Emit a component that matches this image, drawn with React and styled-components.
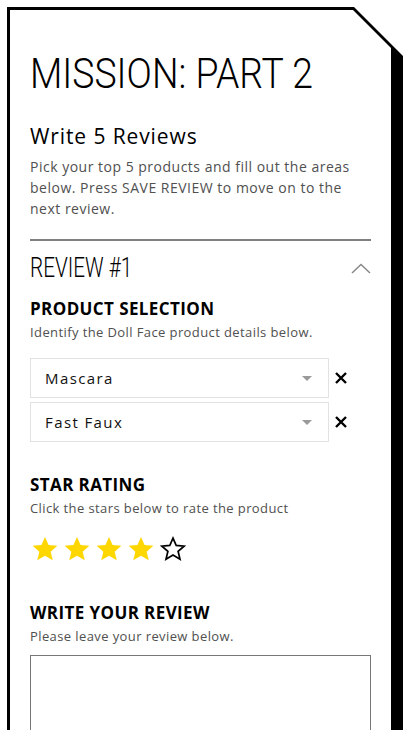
import React from "react";
import styled, { createGlobalStyle } from "styled-components";

const Global = createGlobalStyle`
  html, body { margin: 0; padding: 0; background: #fff; overflow: hidden; }
  body { font-family: "Open Sans", "Liberation Sans", sans-serif; }
  * { box-sizing: border-box; }
`;

const Frame = styled.div`
  margin: 7px 0 0 7px;
  width: 396px;
  padding: 3px 12px 0 3px;
  background: #000;
  clip-path: polygon(0 0, 347px 0, 100% 49px, 100% 100%, 0 100%);
`;

const Panel = styled.div`
  background: #fff;
  min-height: 900px;
  padding: 40px 20px 0 20px;
  clip-path: polygon(0 0, 343px 0, 100% 38px, 100% 100%, 0 100%);
`;

const Title = styled.h1`
  margin: 0;
  font-family: Roboto, sans-serif;
  font-weight: 300;
  font-size: 42px;
  line-height: 48px;
  color: #000;
  display: inline-block;
  white-space: nowrap;
  transform: scaleX(0.89);
  transform-origin: left center;
`;

const Subhead = styled.h2`
  margin: 25px 0 0;
  font-weight: 500;
  font-size: 21px;
  line-height: 26px;
  letter-spacing: 0.9px;
  color: #000;
`;

const Intro = styled.p`
  margin: 7px 0 0;
  font-size: 14px;
  line-height: 21px;
  letter-spacing: 0.5px;
  color: #505050;
`;

const Divider = styled.hr`
  margin: 20px 0 0;
  border: 0;
  height: 2px;
  background: #808080;
`;

const ReviewHeader = styled.div`
  margin-top: 11px;
  display: flex;
  align-items: center;
  justify-content: space-between;
`;

const ReviewTitle = styled.h3`
  margin: 0;
  font-family: Roboto, sans-serif;
  font-weight: 300;
  font-size: 28px;
  line-height: 32px;
  display: inline-block;
  white-space: nowrap;
  transform: scaleX(0.74);
  transform-origin: left center;
`;

const Section = styled.section`
  margin-top: ${(p) => p.$top}px;
`;

const SectionTitle = styled.h4`
  margin: 0;
  font-weight: 700;
  font-size: 17px;
  line-height: 20px;
  letter-spacing: 0.4px;
  color: #000;
`;

const SectionHint = styled.p`
  margin: 4px 0 0;
  font-size: 13px;
  line-height: 18px;
  letter-spacing: 0.4px;
  color: #505050;
`;

const SelectList = styled.div`
  margin-top: 17px;
  display: flex;
  flex-direction: column;
  gap: 4px;
`;

const SelectRow = styled.div`
  display: flex;
  align-items: center;
  gap: 5px;
`;

const SelectBox = styled.div`
  width: 299px;
  height: 40px;
  border: 1px solid #e2e2e2;
  display: flex;
  align-items: center;
  justify-content: space-between;
  padding: 0 16px 0 14px;
  font-size: 15px;
  letter-spacing: 1.4px;
  color: #111;
`;

const Caret = styled.span`
  width: 0;
  height: 0;
  border-left: 5px solid transparent;
  border-right: 5px solid transparent;
  border-top: 5px solid #9a9a9a;
`;

const RemoveButton = styled.button`
  border: 0;
  background: none;
  padding: 0;
  width: 14px;
  height: 14px;
  display: flex;
  cursor: pointer;
`;

const Stars = styled.div`
  margin-top: 19px;
  display: flex;
  gap: 6px;
  padding-left: 2px;
`;

const TextArea = styled.textarea`
  margin-top: 10px;
  display: block;
  width: 100%;
  height: 160px;
  border: 1px solid #777;
  resize: none;
  font-family: inherit;
`;

const StarIcon = ({ filled }) => (
  <svg width="26" height="26" viewBox="0 0 24 24">
    <path
      d="M12 0.9l3.3 7.5 8.1.7-6.15 5.35 1.9 7.95L12 18.2l-7.15 4.2 1.9-7.95L0.6 9.1l8.1-.7z"
      fill={filled ? "#FFD700" : "none"}
      stroke={filled ? "none" : "#000"}
      strokeWidth={filled ? 0 : 1.8}
      strokeLinejoin="miter"
      transform={filled ? undefined : "translate(12 12) scale(0.9) translate(-12 -12)"}
    />
  </svg>
);

const CloseIcon = () => (
  <svg width="14" height="14" viewBox="0 0 14 14">
    <path d="M2 2L12 12M12 2L2 12" stroke="#000" strokeWidth="2.4" />
  </svg>
);

const ChevronUp = () => (
  <svg width="20" height="11" viewBox="0 0 20 11">
    <path d="M1 10L10 1.5L19 10" fill="none" stroke="#888" strokeWidth="1.5" />
  </svg>
);

const products = ["Mascara", "Fast Faux"];

export default function App() {
  return (
    <>
      <Global />
      <Frame>
        <Panel>
          <Title>MISSION: PART 2</Title>
          <Subhead>Write 5 Reviews</Subhead>
          <Intro>
            Pick your top 5 products and fill out the areas below. Press SAVE
            REVIEW to move on to the next review.
          </Intro>
          <Divider />
          <ReviewHeader>
            <ReviewTitle>REVIEW #1</ReviewTitle>
            <ChevronUp />
          </ReviewHeader>

          <Section $top={15}>
            <SectionTitle>PRODUCT SELECTION</SectionTitle>
            <SectionHint>Identify the Doll Face product details below.</SectionHint>
            <SelectList>
              {products.map((p) => (
                <SelectRow key={p}>
                  <SelectBox>
                    <span>{p}</span>
                    <Caret />
                  </SelectBox>
                  <RemoveButton aria-label="remove">
                    <CloseIcon />
                  </RemoveButton>
                </SelectRow>
              ))}
            </SelectList>
          </Section>

          <Section $top={33}>
            <SectionTitle>STAR RATING</SectionTitle>
            <SectionHint>Click the stars below to rate the product</SectionHint>
            <Stars>
              {[1, 2, 3, 4, 5].map((n) => (
                <StarIcon key={n} filled={n <= 4} />
              ))}
            </Stars>
          </Section>

          <Section $top={41}>
            <SectionTitle>WRITE YOUR REVIEW</SectionTitle>
            <SectionHint>Please leave your review below.</SectionHint>
            <TextArea />
          </Section>
        </Panel>
      </Frame>
    </>
  );
}
